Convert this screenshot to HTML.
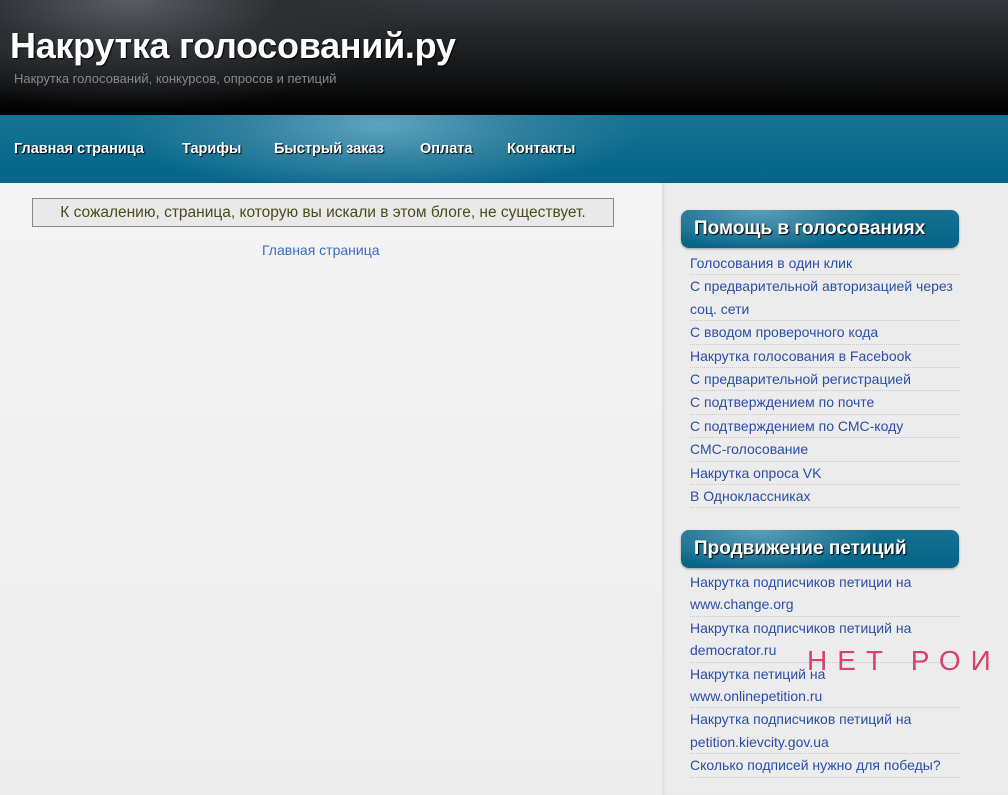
<!DOCTYPE html>
<html><head><meta charset="utf-8"><style>
body{margin:0;width:1008px;height:795px;overflow:hidden;font-family:"Liberation Sans",Arial,sans-serif;background:#f0f0f0;position:relative}
.hdr{position:absolute;left:0;top:0;width:1008px;height:115px;background:radial-gradient(ellipse 300px 110px at 130px 0,#5a5d62 0%,#2c2f33 50%,transparent 100%),linear-gradient(#33373b,#000 100%)}
.hdr h1{position:absolute;left:10px;top:25px;margin:0;font-size:36px;color:#fff;font-weight:bold;text-shadow:1px 1px 1px #000;letter-spacing:-0.3px}
.hdr p{position:absolute;left:14px;top:71px;margin:0;font-size:13px;color:#888}
.nav{position:absolute;left:0;top:115px;width:1008px;height:68px;background:radial-gradient(ellipse 260px 70px at 380px 10px,#5ea4bf 0%,#2f7f9e 55%,transparent 100%),linear-gradient(#177391,#03658a);box-shadow:0 3px 3px #aaa}
.nav span{position:absolute;top:26px;color:#fff;font-weight:bold;font-size:14.5px;text-shadow:1px 1px 1px #000;white-space:nowrap}
.main{position:absolute;left:0;top:183px;width:662px;height:612px;background:linear-gradient(#f4f4f4,#ededed)}
.side{position:absolute;left:662px;top:183px;width:346px;height:612px;background:#ececec;box-shadow:inset 4px 0 5px -2px #ddd}
.err{position:absolute;left:32px;top:198px;width:580px;height:27px;border:1px solid #888;background:#e9e9e9;text-align:center;font-size:15.5px;line-height:27px;color:#4a4a1c}
.home{position:absolute;left:262px;top:242px;font-size:14px;color:#3d6bc4}
.wt{position:absolute;left:681px;width:278px;height:38px;border-radius:8px;background:radial-gradient(ellipse 120px 40px at 80px 0,#5a9fbc,#2e7d9c 60%,transparent 100%),linear-gradient(#16708f,#03658a);box-shadow:0 1px 2px #999}
.wt span{position:absolute;left:13px;top:8px;color:#fff;font-weight:bold;font-size:19px;text-shadow:1px 1px 1px #000;white-space:nowrap}
ul{position:absolute;left:690px;width:269px;margin:0;padding:0;list-style:none}
li{font-size:14px;line-height:22.4px;color:#2a4da8;border-bottom:1px dotted #c8c8c8;white-space:nowrap}
.stamp{position:absolute;left:807px;top:645px;font-size:28px;color:#d8416b;letter-spacing:10px;white-space:nowrap}
</style></head><body>
<div class="hdr"><h1>Накрутка голосований.ру</h1><p>Накрутка голосований, конкурсов, опросов и петиций</p></div>
<div class="nav"><span style="left:14px">Главная страница</span><span style="left:182px">Тарифы</span><span style="left:274px">Быстрый заказ</span><span style="left:420px">Оплата</span><span style="left:507px">Контакты</span></div>
<div class="main"></div><div class="side"></div>
<div class="err">К сожалению, страница, которую вы искали в этом блоге, не существует.</div>
<div class="home">Главная страница</div>
<div class="wt" style="top:210px"><span>Помощь в голосованиях</span></div>
<ul style="top:252px">
<li>Голосования в один клик</li>
<li>С предварительной авторизацией через<br>соц. сети</li>
<li>С вводом проверочного кода</li>
<li>Накрутка голосования в Facebook</li>
<li>С предварительной регистрацией</li>
<li>С подтверждением по почте</li>
<li>С подтверждением по СМС-коду</li>
<li>СМС-голосование</li>
<li>Накрутка опроса VK</li>
<li>В Одноклассниках</li>
</ul>
<div class="wt" style="top:530px"><span>Продвижение петиций</span></div>
<ul style="top:571px">
<li>Накрутка подписчиков петиции на<br>www.change.org</li>
<li>Накрутка подписчиков петиций на<br>democrator.ru</li>
<li>Накрутка петиций на<br>www.onlinepetition.ru</li>
<li>Накрутка подписчиков петиций на<br>petition.kievcity.gov.ua</li>
<li>Сколько подписей нужно для победы?</li>
</ul>
<div class="stamp">НЕТ РОИ</div>
</body></html>
